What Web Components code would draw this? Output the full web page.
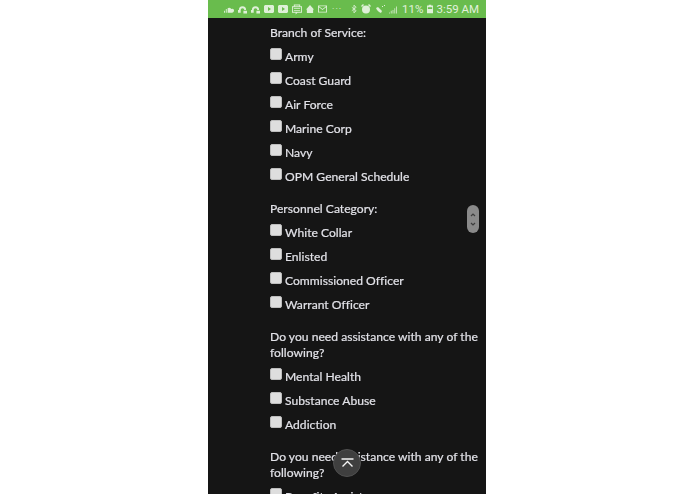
<!DOCTYPE html>
<html><head><meta charset="utf-8"><style>
html,body{margin:0;height:494px;overflow:hidden;background:#fff}
body{display:flex;justify-content:flex-start;font-family:Lato,"Open Sans",sans-serif}
</style></head><body>
<phone-frame>
<status-bar slot="status"></status-bar>
<check-group title="Branch of Service:" items="Army|Coast Guard|Air Force|Marine Corp|Navy|OPM General Schedule"></check-group>
<check-group title="Personnel Category:" items="White Collar|Enlisted|Commissioned Officer|Warrant Officer"></check-group>
<check-group title="Do you need assistance with any of the following?" items="Mental Health|Substance Abuse|Addiction"></check-group>
<check-group title="Do you need assistance with any of the following?" items="Benefits Assistance"></check-group>
<scroll-thumb slot="over"></scroll-thumb>
<top-button slot="over"></top-button>
</phone-frame>
<script>
const def=(n,html,init)=>customElements.define(n,class extends HTMLElement{connectedCallback(){if(this.shadowRoot)return;const r=this.attachShadow({mode:'open'});r.innerHTML=html;init&&init(this,r)}});
def('phone-frame',`<style>:host{display:block;position:relative;width:278px;height:494px;margin-left:208px;background:#151515;overflow:hidden;flex:none}
main{display:flex;flex-direction:column;gap:12px;padding:6.500px 6px 0 62px;filter:blur(.25px)}</style><slot name="status"></slot><main><slot></slot></main><slot name="over"></slot>`);
def('status-bar',`<style>:host{display:flex;align-items:center;justify-content:flex-end;height:18px;background:#69bc4d;color:#e2f1dc;font:11.5px/18px Roboto,sans-serif;padding:0 7px 0 0;box-sizing:border-box;gap:4px;white-space:nowrap;overflow:hidden}
svg{display:block;flex:none;fill:#dff0d8;filter:blur(.3px)}
span{flex:none}</style>
<svg width="10" height="7" viewBox="0 0 11 7"><path d="M0 7V5h1v2zM2 7V3h1v4zM4 7V2a3 3 0 0 1 4 1 2 2 0 0 1 3 2 2 2 0 0 1-2 2z"/></svg>
<svg width="9" height="9" viewBox="0 0 10 9"><path d="M1 5a4 4 0 0 1 8 0H7a2 2 0 0 0-4 0zM0 5h3v3H0zM6 6h4v3H6z"/></svg>
<svg width="9" height="9" viewBox="0 0 10 9"><path d="M1 5a4 4 0 0 1 8 0H7a2 2 0 0 0-4 0zM0 5h3v3H0zM6 6h4v3H6z"/></svg>
<svg width="10" height="8" viewBox="0 0 10 8"><path fill-rule="evenodd" d="M1 0h8l1 1v6l-1 1H1L0 7V1zM4 2v4l3-2z"/></svg>
<svg width="10" height="8" viewBox="0 0 10 8"><path fill-rule="evenodd" d="M1 0h8l1 1v6l-1 1H1L0 7V1zM4 2v4l3-2z"/></svg>
<svg width="10" height="11" viewBox="0 0 11 11"><path fill-rule="evenodd" d="M2 0h7v2h2v7H6l-2 2V9H0V2h2zM3 1v1h5V1zM1 3v5h9V3z"/><path d="M2 4h7v1H2zM2 6h7v1H2z"/></svg>
<svg width="8" height="8" viewBox="0 0 9 9"><path d="M4.500 0 9 5H8v4H1V5H0z"/></svg>
<svg width="9" height="8" viewBox="0 0 10 8"><path fill-rule="evenodd" d="M0 0h10v8H0zM1 1l4 3 4-3v1L5 5 1 2v5h8V1z"/></svg>
<span style="letter-spacing:1px;font-size:9px;margin:0 4px 0 1px;width:11px">···</span>
<svg width="6" height="10" viewBox="0 0 7 10"><path fill="none" stroke="#dff0d8" d="M1 3l5 4-2.500 2.500v-9L6 3 1 7"/></svg>
<svg width="10" height="10" viewBox="0 0 10 10"><circle cx="5" cy="5.500" r="4"/><path d="M0 2l2-2 1 1-2 2zM10 2 8 0 7 1l2 2z"/></svg>
<svg width="10" height="9" viewBox="0 0 10 9"><path d="M1 3l2-1 2 2 2 2-1 2-2-1-2-2zM7 1h1v1H7zM9 0h1v1H9z"/></svg>
<svg width="8" height="9" viewBox="0 0 9 9"><path d="M0 8h1v1H0zM2 6h1v3H2zM4 5h1v4H4zM6 3h1v6H6zM8 1h1v8H8z" opacity=".85"/></svg>
<span style="margin-left:1px">11%</span>
<svg width="6" height="10" viewBox="0 0 7 10"><path fill-rule="evenodd" d="M2 0h3v1h2v9H0V1h2zM1 3v2h5V3z"/></svg>
<span style="margin-left:-1px">3:59 AM</span>`);
def('check-item',`<style>:host{display:flex;align-items:flex-start;height:24px;gap:3px;color:#e2e2e8;font:12.1px/24px Lato,sans-serif;letter-spacing:.02px;-webkit-text-stroke:.2px #e2e2e8}
i{display:block;width:12px;height:12px;box-sizing:border-box;margin-top:3.500px;border:1px solid #bdbdbd;border-radius:2px;background:#dedede;flex:none}</style><i></i><span><slot></slot></span>`);
def('check-group',`<style>:host{display:block}
h3{margin:0;font:12.1px/16px Lato,sans-serif;letter-spacing:.02px;color:#e2e2e8;-webkit-text-stroke:.2px #e2e2e8;padding-bottom:4px}</style><h3></h3><div></div>`,(h,r)=>{
r.querySelector('h3').textContent=h.getAttribute('title');
const d=r.querySelector('div');h.getAttribute('items').split('|').forEach(t=>{const c=document.createElement('check-item');c.textContent=t;d.append(c)});
h.removeAttribute('title')});
def('scroll-thumb',`<style>:host{position:absolute;left:259px;top:204.500px;width:11.500px;height:28px;border-radius:6px;background:#8a8a8a;display:block}
svg{display:block;margin:5px auto 0}</style><svg width="8" height="18" viewBox="0 0 8 18" fill="none" stroke="#3d3d3d" stroke-width="1.200"><path d="M2 6l2-2 2 2M2 13l2 2 2-2"/></svg>`);
def('top-button',`<style>:host{position:absolute;left:125px;top:449px;width:28px;height:28px;border-radius:50%;background:#3f3f3f;border:1px solid #505050;box-sizing:border-box;display:flex;align-items:center;justify-content:center}</style>
<svg width="13" height="10" viewBox="0 0 13 10" fill="none" stroke="#f5f5f5" stroke-width="1.400"><path d="M.5 1h12M1.500 8.500l5-5 5 5"/></svg>`);
</script>
</body></html>
